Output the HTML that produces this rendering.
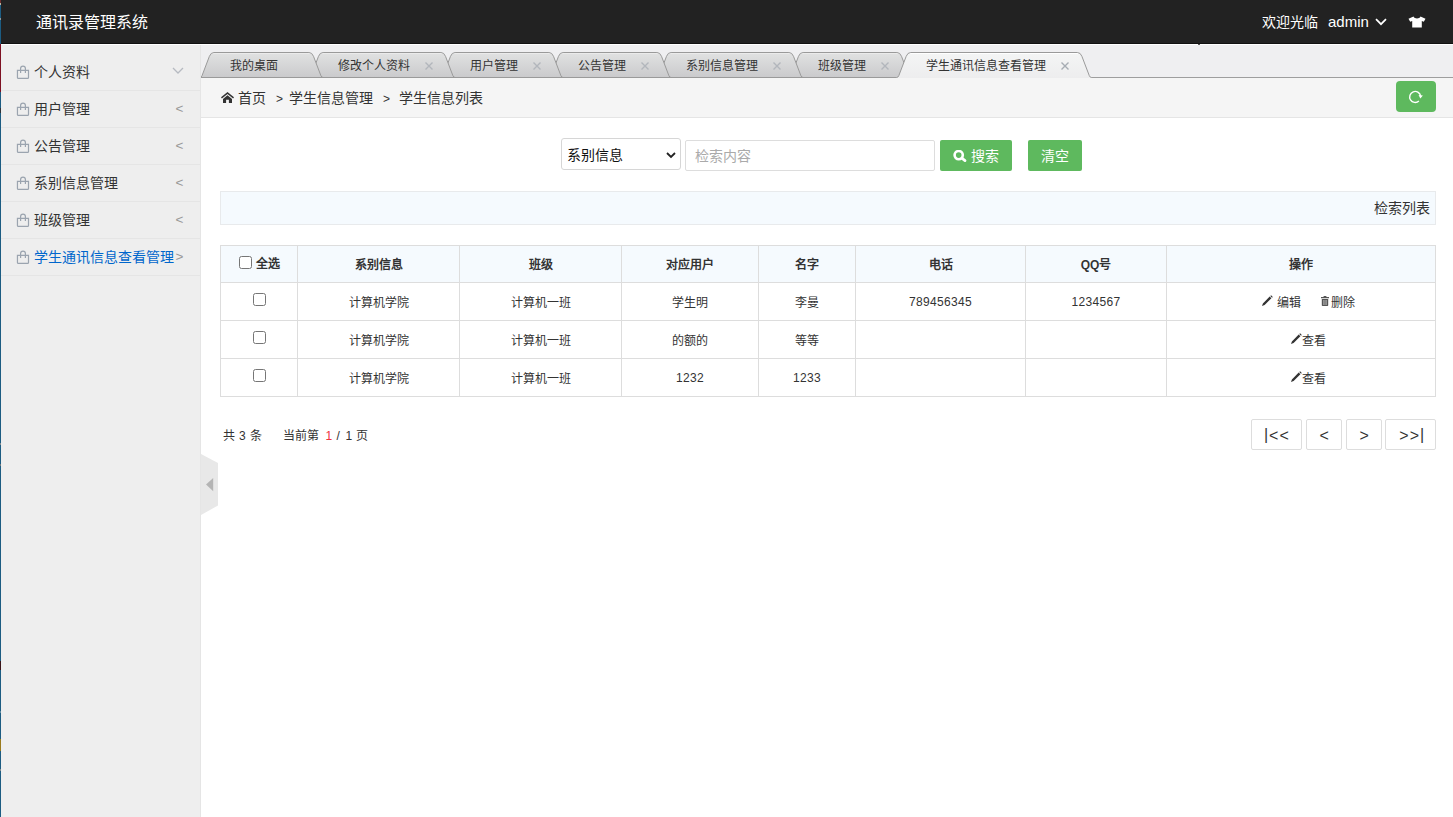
<!DOCTYPE html>
<html lang="zh-CN">
<head>
<meta charset="utf-8">
<title>通讯录管理系统</title>
<style>
*{box-sizing:border-box;margin:0;padding:0}
html,body{width:1453px;height:817px;overflow:hidden;background:#fff}
body{font-family:"Liberation Sans",sans-serif;font-size:14px;color:#333;position:relative}
a{color:#333;text-decoration:none}
ul{list-style:none}

/* left 1px strip (window edge artefact) */
#edge{position:absolute;left:0;top:0;width:1px;height:817px;z-index:50;
 background:linear-gradient(to bottom,#6e2c2c 0px,#6e2c2c 3px,#bdb49e 3px,#bdb49e 5px,#1c5c82 5px,#1c5c82 18px,#8e9a9c 18px,#8e9a9c 20px,#1c5c82 20px,#1c5c82 44px,#7d1022 44px,#7d1022 92px,#1c5c82 92px,#1c5c82 108px,#2f3338 108px,#2f3338 113px,#1c5c82 113px,#1c5c82 443px,#7f8a90 443px,#7f8a90 445px,#1c5c82 445px,#1c5c82 464px,#6f7a80 464px,#6f7a80 466px,#1c5c82 466px,#1c5c82 661px,#3a1418 661px,#3a1418 670px,#1c5c82 670px,#1c5c82 711px,#5f8aa0 711px,#5f8aa0 713px,#1c5c82 713px,#1c5c82 739px,#9a7a1c 739px,#9a7a1c 751px,#1c5c82 751px,#1c5c82 769px,#7f8a90 769px,#7f8a90 771px,#1c5c82 771px,#1c5c82 817px)}

/* header */
#hd{position:absolute;left:0;top:0;width:1453px;height:44px;background:#222;color:#fff;border-bottom:1px solid #111}
#hdl{position:absolute;left:0;top:44px;width:1453px;height:1px;background:#fff;z-index:5}
#hd .logo{position:absolute;left:36px;top:1px;height:44px;line-height:44px;font-size:16px;color:#fff}
#hd .user{position:absolute;left:1262px;top:0;height:44px;line-height:44px;font-size:14px;color:#fff;white-space:nowrap}
#hd .user .nm{font-size:15px;margin-left:10px}
#hd .chev{position:absolute;left:1375px;top:18px}
#hd .skin{position:absolute;left:1408px;top:16px}

/* sidebar */
#aside{position:absolute;left:0;top:44px;width:201px;height:773px;background:#eeeeee;border-right:1px solid #e5e5e5;padding-top:10px}
#aside .it{position:relative;height:37px;line-height:36px;border-bottom:1px solid #e5e5e5;padding-left:34px;font-size:14px;color:#333;white-space:nowrap}
#aside .it svg.bag{position:absolute;left:16px;top:11px}
#aside .it .ar{position:absolute;left:175.5px;top:0;font-size:13.5px;color:#999}
#aside .it.cur{color:#0066cc}

/* collapse handle */
#arrow{position:absolute;left:201px;top:453px;width:17px;height:64px}

/* tabs */
#tabs{position:absolute;left:201px;top:44px;width:1252px;height:34px;background:#efeff1}
#tabs>svg:first-child{position:absolute;left:0;top:0;overflow:hidden}
#tabs .tx{position:absolute;top:13px;height:18px;line-height:18px;font-size:12px;color:#333;white-space:nowrap}
#tabs .cx{position:absolute;top:17.5px}

/* breadcrumb */
#bc{position:absolute;left:201px;top:78px;width:1252px;height:40px;background:#f5f5f5;border-bottom:1px solid #e5e5e5;font-size:14px;line-height:41px;color:#333;white-space:nowrap}
#bc .home{position:absolute;left:20px;top:14px}
#bc .t{position:absolute;top:0}
#bc .g{font-size:12px;top:1px}
#bc .btn{position:absolute;left:1195px;top:3px;width:40px;height:31px;background:#5eb95e;border-radius:4px}
#bc .btn svg{position:absolute;left:0;top:0}

/* search row */
.sel{position:absolute;left:561px;top:138px;width:120px;height:32px;border:1px solid #d6d6d6;border-radius:3px;background:#fff;font-size:14px;line-height:32px;padding-left:5px;color:#111}
.sel svg{position:absolute;left:104px;top:12.5px}
.inp{position:absolute;left:685px;top:140px;width:250px;height:31px;border:1px solid #ddd;border-radius:2px;background:#fff;font-size:14px;line-height:31px;padding-left:9px;color:#aaa}
.gbtn{position:absolute;top:140px;height:31px;background:#5eb95e;color:#fff;font-size:14px;line-height:32px;border-radius:2px;white-space:nowrap}
.gbtn svg{position:absolute;left:13px;top:10px}

/* panel */
#panel{position:absolute;left:220px;top:191px;width:1216px;height:34px;background:#f5fafe;border:1px solid #e8eaec;font-size:14px;line-height:32px;text-align:right;padding-right:5px;color:#333}

/* table */
#tb{position:absolute;left:220px;top:245px;width:1215px;border-collapse:collapse;table-layout:fixed;font-size:12px;color:#333}
#tb th,#tb td{border:1px solid #ddd;text-align:center;vertical-align:middle;height:38px;padding:0;white-space:nowrap}
#tb th{background:#f5fafe;font-weight:bold;height:37px;padding-bottom:2px}
.ck{display:inline-block;width:13px;height:13px;border:1px solid #767676;border-radius:2.5px;background:#fff;vertical-align:middle;position:relative;top:-3px}
th .ck{top:-3px;margin-left:1px}

.ops{position:relative;height:37px;text-align:left}
.ops span{position:absolute;top:10px;line-height:20px}
.ops .pen{position:absolute;top:12px}
.ops .tr{position:absolute;top:13px}

#tb td.n{letter-spacing:.3px}

/* pager */
#pg{position:absolute;left:223px;top:427px;font-size:12px;line-height:18px;color:#333;white-space:nowrap}
#pg span{position:absolute;top:0}
#pg b{font-weight:normal;color:#f0323c}
.pb{position:absolute;top:419px;height:31px;border:1px solid #ddd;border-radius:2px;background:#fff;font-size:16px;line-height:29px;color:#333}
.pb span{position:absolute;top:1px}
</style>
</head>
<body>
<div id="hd">
  <div class="logo">通讯录管理系统</div>
  <div class="user">欢迎光临<span class="nm">admin</span></div>
  <svg class="chev" width="12" height="8" viewBox="0 0 12 8"><path d="M1 1.2 L6 6.2 L11 1.2" fill="none" stroke="#fff" stroke-width="1.7"/></svg>
  <svg class="skin" width="18" height="12" viewBox="0 0 18 14" preserveAspectRatio="none"><path d="M5.5 0.5 L0.5 3.2 L2.2 6.6 L4.2 5.8 L4.2 13.5 L13.8 13.5 L13.8 5.8 L15.8 6.6 L17.5 3.2 L12.5 0.5 C11.8 2.2 10.5 2.8 9 2.8 C7.5 2.8 6.2 2.2 5.5 0.5 Z" fill="#fff"/></svg>
</div>

<div id="hdl"><i style="position:absolute;left:1197.5px;top:0;width:2px;height:1px;background:#555"></i></div>
<div id="aside">
  <div class="it"><svg class="bag" width="14" height="15" viewBox="0 0 14 15"><path d="M1.45 5.4 H12.5 V12.8 Q12.5 13.3 12 13.3 H1.95 Q1.45 13.3 1.45 12.8 Z M4.6 7.9 V3.6 A2.4 2.4 0 0 1 9.4 3.6 V7.9" fill="none" stroke="#9ba4af" stroke-width="1.2"/></svg>个人资料<svg style="position:absolute;left:172px;top:13px" width="12" height="8" viewBox="0 0 12 8"><path d="M1 1 L6 6 L11 1" fill="none" stroke="#b6bac1" stroke-width="1.3"/></svg></div>
  <div class="it"><svg class="bag" width="14" height="15" viewBox="0 0 14 15"><path d="M1.45 5.4 H12.5 V12.8 Q12.5 13.3 12 13.3 H1.95 Q1.45 13.3 1.45 12.8 Z M4.6 7.9 V3.6 A2.4 2.4 0 0 1 9.4 3.6 V7.9" fill="none" stroke="#9ba4af" stroke-width="1.2"/></svg>用户管理<span class="ar">&lt;</span></div>
  <div class="it"><svg class="bag" width="14" height="15" viewBox="0 0 14 15"><path d="M1.45 5.4 H12.5 V12.8 Q12.5 13.3 12 13.3 H1.95 Q1.45 13.3 1.45 12.8 Z M4.6 7.9 V3.6 A2.4 2.4 0 0 1 9.4 3.6 V7.9" fill="none" stroke="#9ba4af" stroke-width="1.2"/></svg>公告管理<span class="ar">&lt;</span></div>
  <div class="it"><svg class="bag" width="14" height="15" viewBox="0 0 14 15"><path d="M1.45 5.4 H12.5 V12.8 Q12.5 13.3 12 13.3 H1.95 Q1.45 13.3 1.45 12.8 Z M4.6 7.9 V3.6 A2.4 2.4 0 0 1 9.4 3.6 V7.9" fill="none" stroke="#9ba4af" stroke-width="1.2"/></svg>系别信息管理<span class="ar">&lt;</span></div>
  <div class="it"><svg class="bag" width="14" height="15" viewBox="0 0 14 15"><path d="M1.45 5.4 H12.5 V12.8 Q12.5 13.3 12 13.3 H1.95 Q1.45 13.3 1.45 12.8 Z M4.6 7.9 V3.6 A2.4 2.4 0 0 1 9.4 3.6 V7.9" fill="none" stroke="#9ba4af" stroke-width="1.2"/></svg>班级管理<span class="ar">&lt;</span></div>
  <div class="it cur"><svg class="bag" width="14" height="15" viewBox="0 0 14 15"><path d="M1.45 5.4 H12.5 V12.8 Q12.5 13.3 12 13.3 H1.95 Q1.45 13.3 1.45 12.8 Z M4.6 7.9 V3.6 A2.4 2.4 0 0 1 9.4 3.6 V7.9" fill="none" stroke="#9ba4af" stroke-width="1.2"/></svg>学生通讯信息查看管理<span class="ar">&gt;</span></div>
</div>

<svg id="arrow" width="17" height="64" viewBox="0 0 17 64"><path d="M0 1 L17 10 L17 52.5 L0 62 Z" fill="#e8e8e8"/><path d="M12.2 25 L5 31.6 L12.2 38.2 Z" fill="#b4b4b4"/></svg>

<div id="tabs">
<svg width="1252" height="35" viewBox="0 0 1252 35">
<defs><linearGradient id="tg" x1="0" y1="0" x2="0" y2="1"><stop offset="0" stop-color="#e1e2e2"/><stop offset="1" stop-color="#cacacc"/></linearGradient><linearGradient id="ta" x1="0" y1="0" x2="0" y2="1"><stop offset="0" stop-color="#f4f5f5"/><stop offset="1" stop-color="#ededee"/></linearGradient></defs>
<rect x="0" y="33" width="1252" height="1" fill="#9e9e9e"/>
<path d="M587.8 33.5 Q589.4 33.5 590.1 31.7 L597.5 12.3 Q598.9 8.5 602.1 8.5 L695.9 8.5 Q699.1 8.5 700.5 12.3 L707.9 31.7 Q708.6 33.5 710.2 33.5 Z" fill="url(#tg)" stroke="#9a9a9a" stroke-width="1"/>
<path d="M600.6 9.5 L697.4 9.5" stroke="#fff" stroke-opacity=".35" stroke-width="1" fill="none"/>
<path d="M455.8 33.5 Q457.4 33.5 458.1 31.7 L465.5 12.3 Q466.9 8.5 470.1 8.5 L587.9 8.5 Q591.1 8.5 592.5 12.3 L599.9 31.7 Q600.6 33.5 602.2 33.5 Z" fill="url(#tg)" stroke="#9a9a9a" stroke-width="1"/>
<path d="M468.6 9.5 L589.4 9.5" stroke="#fff" stroke-opacity=".35" stroke-width="1" fill="none"/>
<path d="M347.8 33.5 Q349.4 33.5 350.1 31.7 L357.5 12.3 Q358.9 8.5 362.1 8.5 L455.9 8.5 Q459.1 8.5 460.5 12.3 L467.9 31.7 Q468.6 33.5 470.2 33.5 Z" fill="url(#tg)" stroke="#9a9a9a" stroke-width="1"/>
<path d="M360.6 9.5 L457.4 9.5" stroke="#fff" stroke-opacity=".35" stroke-width="1" fill="none"/>
<path d="M239.8 33.5 Q241.4 33.5 242.1 31.7 L249.5 12.3 Q250.9 8.5 254.1 8.5 L347.9 8.5 Q351.1 8.5 352.5 12.3 L359.9 31.7 Q360.6 33.5 362.2 33.5 Z" fill="url(#tg)" stroke="#9a9a9a" stroke-width="1"/>
<path d="M252.6 9.5 L349.4 9.5" stroke="#fff" stroke-opacity=".35" stroke-width="1" fill="none"/>
<path d="M107.8 33.5 Q109.4 33.5 110.1 31.7 L117.5 12.3 Q118.9 8.5 122.1 8.5 L239.9 8.5 Q243.1 8.5 244.5 12.3 L251.9 31.7 Q252.6 33.5 254.2 33.5 Z" fill="url(#tg)" stroke="#9a9a9a" stroke-width="1"/>
<path d="M120.6 9.5 L241.4 9.5" stroke="#fff" stroke-opacity=".35" stroke-width="1" fill="none"/>
<path d="M-1.3 33.5 Q0.3 33.5 1.0 31.7 L8.4 12.3 Q9.8 8.5 13.0 8.5 L107.9 8.5 Q111.1 8.5 112.5 12.3 L119.9 31.7 Q120.6 33.5 122.2 33.5 Z" fill="url(#tg)" stroke="#9a9a9a" stroke-width="1"/>
<path d="M11.5 9.5 L109.4 9.5" stroke="#fff" stroke-opacity=".35" stroke-width="1" fill="none"/>
<path d="M695.5 33.5 Q697.1 33.5 697.8 31.7 L705.2 12.3 Q706.6 8.5 709.8 8.5 L876.3 8.5 Q879.5 8.5 880.9 12.3 L888.3 31.7 Q889.0 33.5 890.6 33.5 L890.6 34 L695.5 34 Z" fill="url(#ta)"/>
<path d="M707.8 9.5 L878.3 9.5" stroke="#fff" stroke-width="1" fill="none"/>
<path d="M695.5 33.5 Q697.1 33.5 697.8 31.7 L705.2 12.3 Q706.6 8.5 709.8 8.5 L876.3 8.5 Q879.5 8.5 880.9 12.3 L888.3 31.7 Q889.0 33.5 890.6 33.5" fill="none" stroke="#9a9a9a" stroke-width="1"/>
</svg>
<span class="tx" style="left:29.0px">我的桌面</span>
<span class="tx" style="left:137.0px">修改个人资料</span>
<svg class="cx" style="left:223.5px" width="8" height="8" viewBox="0 0 8 8"><path d="M0.5 0.5 L7.5 7.5 M7.5 0.5 L0.5 7.5" stroke="#b2b6bc" stroke-width="1.4" fill="none"/></svg>
<span class="tx" style="left:269.0px">用户管理</span>
<svg class="cx" style="left:331.5px" width="8" height="8" viewBox="0 0 8 8"><path d="M0.5 0.5 L7.5 7.5 M7.5 0.5 L0.5 7.5" stroke="#b2b6bc" stroke-width="1.4" fill="none"/></svg>
<span class="tx" style="left:377.0px">公告管理</span>
<svg class="cx" style="left:439.5px" width="8" height="8" viewBox="0 0 8 8"><path d="M0.5 0.5 L7.5 7.5 M7.5 0.5 L0.5 7.5" stroke="#b2b6bc" stroke-width="1.4" fill="none"/></svg>
<span class="tx" style="left:485.0px">系别信息管理</span>
<svg class="cx" style="left:571.5px" width="8" height="8" viewBox="0 0 8 8"><path d="M0.5 0.5 L7.5 7.5 M7.5 0.5 L0.5 7.5" stroke="#b2b6bc" stroke-width="1.4" fill="none"/></svg>
<span class="tx" style="left:617.0px">班级管理</span>
<svg class="cx" style="left:679.5px" width="8" height="8" viewBox="0 0 8 8"><path d="M0.5 0.5 L7.5 7.5 M7.5 0.5 L0.5 7.5" stroke="#b2b6bc" stroke-width="1.4" fill="none"/></svg>
<span class="tx" style="left:725.0px">学生通讯信息查看管理</span>
<svg class="cx" style="left:860.0px" width="8" height="8" viewBox="0 0 8 8"><path d="M0.5 0.5 L7.5 7.5 M7.5 0.5 L0.5 7.5" stroke="#a6acb3" stroke-width="1.4" fill="none"/></svg>
</div>

<div id="bc">
  <svg class="home" width="13" height="11" viewBox="0 0 13 11"><path d="M6.5 0 L0 5.3 L0.9 6.4 L6.5 1.9 L12.1 6.4 L13 5.3 Z M2 6.9 L6.5 3.3 L11 6.9 V11 H7.9 V7.8 H5.1 V11 H2 Z" fill="#333"/></svg>
  <span class="t" style="left:37px">首页</span>
  <span class="t g" style="left:75px">&gt;</span>
  <span class="t" style="left:88px">学生信息管理</span>
  <span class="t g" style="left:182px">&gt;</span>
  <span class="t" style="left:198px">学生信息列表</span>
  <div class="btn"><svg width="40" height="31" viewBox="0 0 40 31"><path d="M22.9 20 A5.5 5.5 0 1 1 24.6 14.95" fill="none" stroke="#fff" stroke-width="1.4"/><path d="M22.6 13.9 L26.9 14.6 L24.3 17.6 Z" fill="#fff"/></svg></div>
</div>

<div class="sel">系别信息<svg width="10" height="7" viewBox="0 0 10 7"><path d="M1 1 L5 5 L9 1" fill="none" stroke="#222" stroke-width="1.8"/></svg></div>
<div class="inp">检索内容</div>
<div class="gbtn" style="left:940px;width:72px;padding-left:31px"><svg width="14" height="13" viewBox="0 0 14 13"><circle cx="5.7" cy="5.1" r="4.1" fill="none" stroke="#fff" stroke-width="2.6"/><path d="M9.2 8.4 L12 10.6" stroke="#fff" stroke-width="2.8" stroke-linecap="round"/></svg>搜索</div>
<div class="gbtn" style="left:1028px;width:54px;padding-left:13px">清空</div>

<div id="panel">检索列表</div>

<table id="tb">
<colgroup><col style="width:77px"><col style="width:162px"><col style="width:162px"><col style="width:137px"><col style="width:97px"><col style="width:170px"><col style="width:141px"><col style="width:269px"></colgroup>
<tr><th><span class="ck"></span> 全选</th><th>系别信息</th><th>班级</th><th>对应用户</th><th>名字</th><th>电话</th><th>QQ号</th><th>操作</th></tr>
<tr><td><span class="ck"></span></td><td>计算机学院</td><td>计算机一班</td><td>学生明</td><td>李曼</td><td class="n">789456345</td><td class="n">1234567</td><td><div class="ops"><svg class="pen" style="left:95px" width="11" height="11" viewBox="0 0 11 11"><path d="M0 11 L0.9 8.4 L7.7 1.6 L9.4 3.3 L2.6 10.1 Z M8.3 1 L9.1 0.2 L10.8 1.9 L10 2.7 Z" fill="#333"/></svg><span style="left:109.6px">编辑</span><svg class="tr" style="left:154px" width="8" height="10" viewBox="0 0 8 10"><path d="M0 1.1 H2.6 V0 H5.4 V1.1 H8 V2.3 H0 Z M0.8 3 H7.2 V9.3 Q7.2 10 6.5 10 H1.5 Q0.8 10 0.8 9.3 Z" fill="#555"/><path d="M2.7 4 V9 M4 4 V9 M5.3 4 V9" stroke="#fff" stroke-opacity=".75" stroke-width=".6"/></svg><span style="left:163.6px">删除</span></div></td></tr>
<tr><td><span class="ck"></span></td><td>计算机学院</td><td>计算机一班</td><td>的额的</td><td>等等</td><td></td><td></td><td><div class="ops"><svg class="pen" style="left:124px" width="11" height="11" viewBox="0 0 11 11"><path d="M0 11 L0.9 8.4 L7.7 1.6 L9.4 3.3 L2.6 10.1 Z M8.3 1 L9.1 0.2 L10.8 1.9 L10 2.7 Z" fill="#333"/></svg><span style="left:135px">查看</span></div></td></tr>
<tr><td><span class="ck"></span></td><td>计算机学院</td><td>计算机一班</td><td class="n">1232</td><td class="n">1233</td><td></td><td></td><td><div class="ops"><svg class="pen" style="left:124px" width="11" height="11" viewBox="0 0 11 11"><path d="M0 11 L0.9 8.4 L7.7 1.6 L9.4 3.3 L2.6 10.1 Z M8.3 1 L9.1 0.2 L10.8 1.9 L10 2.7 Z" fill="#333"/></svg><span style="left:135px">查看</span></div></td></tr>
</table>

<div id="pg"><span style="left:0">共</span><span style="left:16px">3</span><span style="left:26.5px">条</span><span style="left:60.3px">当前第</span><span style="left:102.6px"><b>1</b></span><span style="left:113.6px">/</span><span style="left:122.5px">1</span><span style="left:132.8px">页</span></div>
<div class="pb" style="left:1251px;width:51px"><span style="left:12px;top:0">|</span><span style="left:17px">&lt;</span><span style="left:27.5px">&lt;</span></div>
<div class="pb" style="left:1306px;width:36px"><span style="left:12.5px">&lt;</span></div>
<div class="pb" style="left:1346px;width:36px"><span style="left:12.5px">&gt;</span></div>
<div class="pb" style="left:1385px;width:51px"><span style="left:13.3px">&gt;</span><span style="left:23.8px">&gt;</span><span style="left:34px;top:0">|</span></div>

<div id="edge"></div>
</body>
</html>
